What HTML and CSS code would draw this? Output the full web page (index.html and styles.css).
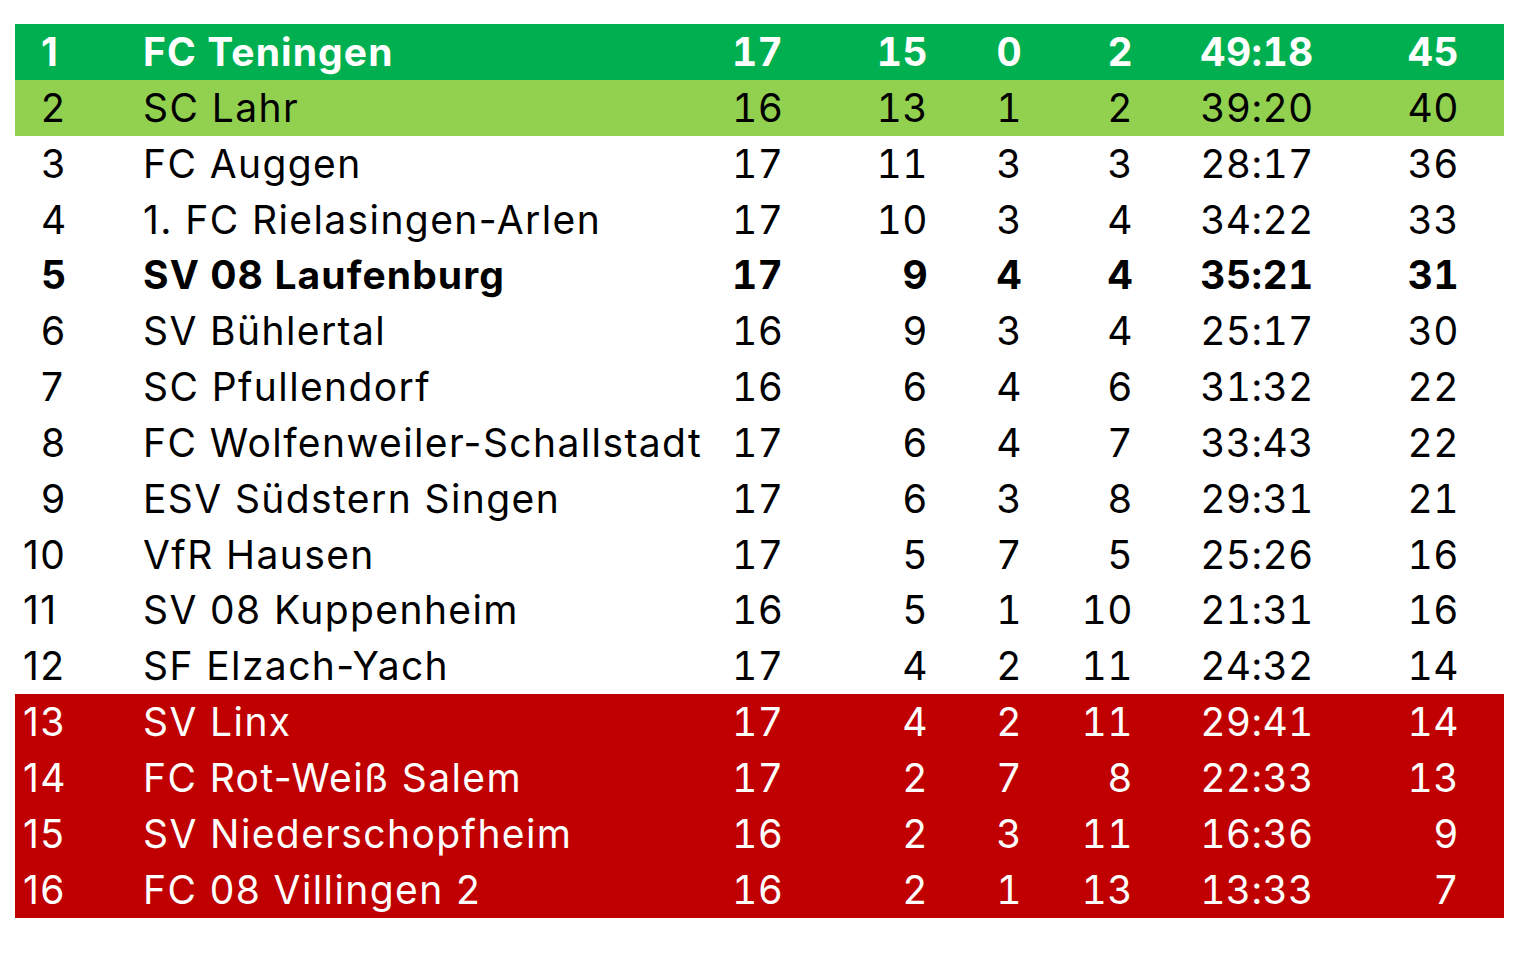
FILE: index.html
```html
<!DOCTYPE html>
<html lang="de">
<head>
<meta charset="utf-8">
<title>Tabelle</title>
<link rel="stylesheet" href="styles.css">
</head>
<body>
<div class="table">
  <div class="row first bold"><span class="rank one">1</span><span class="name">FC Teningen</span><span class="num games">17</span><span class="num w">15</span><span class="num d">0</span><span class="num l">2</span><span class="num goals">49:18</span><span class="num pts">45</span></div>
  <div class="row second"><span class="rank one">2</span><span class="name">SC Lahr</span><span class="num games">16</span><span class="num w">13</span><span class="num d">1</span><span class="num l">2</span><span class="num goals">39:20</span><span class="num pts">40</span></div>
  <div class="row"><span class="rank one">3</span><span class="name">FC Auggen</span><span class="num games">17</span><span class="num w">11</span><span class="num d">3</span><span class="num l">3</span><span class="num goals">28:17</span><span class="num pts">36</span></div>
  <div class="row"><span class="rank one">4</span><span class="name">1. FC Rielasingen-Arlen</span><span class="num games">17</span><span class="num w">10</span><span class="num d">3</span><span class="num l">4</span><span class="num goals">34:22</span><span class="num pts">33</span></div>
  <div class="row bold"><span class="rank one">5</span><span class="name">SV 08 Laufenburg</span><span class="num games">17</span><span class="num w">9</span><span class="num d">4</span><span class="num l">4</span><span class="num goals">35:21</span><span class="num pts">31</span></div>
  <div class="row"><span class="rank one">6</span><span class="name">SV Bühlertal</span><span class="num games">16</span><span class="num w">9</span><span class="num d">3</span><span class="num l">4</span><span class="num goals">25:17</span><span class="num pts">30</span></div>
  <div class="row"><span class="rank one">7</span><span class="name">SC Pfullendorf</span><span class="num games">16</span><span class="num w">6</span><span class="num d">4</span><span class="num l">6</span><span class="num goals">31:32</span><span class="num pts">22</span></div>
  <div class="row"><span class="rank one">8</span><span class="name">FC Wolfenweiler-Schallstadt</span><span class="num games">17</span><span class="num w">6</span><span class="num d">4</span><span class="num l">7</span><span class="num goals">33:43</span><span class="num pts">22</span></div>
  <div class="row"><span class="rank one">9</span><span class="name">ESV Südstern Singen</span><span class="num games">17</span><span class="num w">6</span><span class="num d">3</span><span class="num l">8</span><span class="num goals">29:31</span><span class="num pts">21</span></div>
  <div class="row"><span class="rank">10</span><span class="name">VfR Hausen</span><span class="num games">17</span><span class="num w">5</span><span class="num d">7</span><span class="num l">5</span><span class="num goals">25:26</span><span class="num pts">16</span></div>
  <div class="row"><span class="rank">11</span><span class="name">SV 08 Kuppenheim</span><span class="num games">16</span><span class="num w">5</span><span class="num d">1</span><span class="num l">10</span><span class="num goals">21:31</span><span class="num pts">16</span></div>
  <div class="row"><span class="rank">12</span><span class="name">SF Elzach-Yach</span><span class="num games">17</span><span class="num w">4</span><span class="num d">2</span><span class="num l">11</span><span class="num goals">24:32</span><span class="num pts">14</span></div>
  <div class="row down"><span class="rank">13</span><span class="name">SV Linx</span><span class="num games">17</span><span class="num w">4</span><span class="num d">2</span><span class="num l">11</span><span class="num goals">29:41</span><span class="num pts">14</span></div>
  <div class="row down"><span class="rank">14</span><span class="name">FC Rot-Weiß Salem</span><span class="num games">17</span><span class="num w">2</span><span class="num d">7</span><span class="num l">8</span><span class="num goals">22:33</span><span class="num pts">13</span></div>
  <div class="row down"><span class="rank">15</span><span class="name">SV Niederschopfheim</span><span class="num games">16</span><span class="num w">2</span><span class="num d">3</span><span class="num l">11</span><span class="num goals">16:36</span><span class="num pts">9</span></div>
  <div class="row down"><span class="rank">16</span><span class="name">FC 08 Villingen 2</span><span class="num games">16</span><span class="num w">2</span><span class="num d">1</span><span class="num l">13</span><span class="num goals">13:33</span><span class="num pts">7</span></div>
</div>
</body>
</html>
```
FILE: styles.css
```css
html, body {
  margin: 0;
  padding: 0;
  background: #ffffff;
}

body {
  font-family: "Inter", "Roboto", "Liberation Sans", sans-serif;
  font-size: 39px;
  color: #000000;
}

.table {
  margin: 24px 0 0 15px;
  width: 1489px;
  display: flex;
  flex-direction: column;
}

.row {
  display: grid;
  grid-template-columns: 128px 587px 98px 100px 94px 111px 248px 78px 45px;
  height: 55.85px;
  line-height: 55.85px;
  white-space: nowrap;
  letter-spacing: 1.4px;
}

.row.bold {
  font-weight: 700;
  letter-spacing: 1.1px;
}

.first {
  background: #00b050;
  color: #ffffff;
}

.second {
  background: #92d050;
}

.down {
  background: #c00000;
  color: #ffffff;
}

.rank {
  padding-left: 8px;
}

.rank.one {
  padding-left: 26px;
}

.num {
  font-variant-numeric: tabular-nums;
  letter-spacing: 0.4px;
}

.bold .num {
  letter-spacing: 0.4px;
}

.games {
  text-align: left;
  padding-left: 2px;
}

.w,
.d,
.l,
.pts {
  text-align: right;
}

.goals {
  text-align: center;
}
```
